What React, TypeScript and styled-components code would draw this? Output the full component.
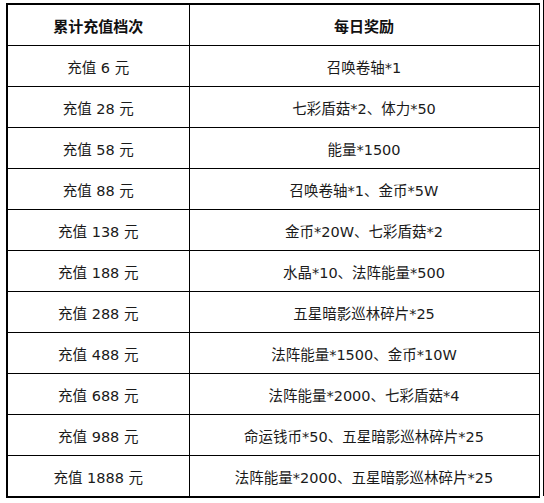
import React from "react";
import styled, { createGlobalStyle } from "styled-components";

const Global = createGlobalStyle`
  html, body { margin: 0; padding: 0; background: #fff; }
  body { font-family: "DejaVu Sans", "Noto Sans CJK SC", sans-serif; color: #111; }
`;

const Frame = styled.div`
  display: flex;
  width: 544px;
  height: 503px;
  box-sizing: border-box;
  padding: 3px 0 0 6px;
`;

const Edge = styled.div`
  width: 2px;
  height: 496px;
  margin-top: -3px;
  margin-left: 3px;
  background: #000;
`;

const Table = styled.table`
  border-collapse: collapse;
  width: 532px;
  height: 493px;
  table-layout: fixed;
  border: 2px solid #000;
  border-right-width: 1px;
`;

const Col = styled.col<{ $w: number }>`
  width: ${(p) => p.$w}px;
`;

const Head = styled.th`
  border: 1px solid #000;
  height: 40px;
  padding: 0;
  font-family: "Noto Sans CJK SC", sans-serif;
  font-size: 15px;
  font-weight: 700;
  text-align: center;
  vertical-align: middle;
  color: #111;
`;

const Cell = styled.td`
  border: 1px solid #000;
  height: 40px;
  padding: 0;
  font-size: 14.5px;
  text-align: center;
  vertical-align: middle;
  color: #1a1a1a;
  white-space: nowrap;
`;

const rows: [string, string][] = [
  ["充值 6 元", "召唤卷轴*1"],
  ["充值 28 元", "七彩盾菇*2、体力*50"],
  ["充值 58 元", "能量*1500"],
  ["充值 88 元", "召唤卷轴*1、金币*5W"],
  ["充值 138 元", "金币*20W、七彩盾菇*2"],
  ["充值 188 元", "水晶*10、法阵能量*500"],
  ["充值 288 元", "五星暗影巡林碎片*25"],
  ["充值 488 元", "法阵能量*1500、金币*10W"],
  ["充值 688 元", "法阵能量*2000、七彩盾菇*4"],
  ["充值 988 元", "命运钱币*50、五星暗影巡林碎片*25"],
  ["充值 1888 元", "法阵能量*2000、五星暗影巡林碎片*25"],
];

export default function App() {
  return (
    <>
      <Global />
      <Frame>
        <Table>
          <colgroup>
            <Col $w={182} />
            <Col $w={350} />
          </colgroup>
          <thead>
            <tr>
              <Head>累计充值档次</Head>
              <Head>每日奖励</Head>
            </tr>
          </thead>
          <tbody>
            {rows.map(([a, b]) => (
              <tr key={a}>
                <Cell>{a}</Cell>
                <Cell>{b}</Cell>
              </tr>
            ))}
          </tbody>
        </Table>
        <Edge />
      </Frame>
    </>
  );
}
